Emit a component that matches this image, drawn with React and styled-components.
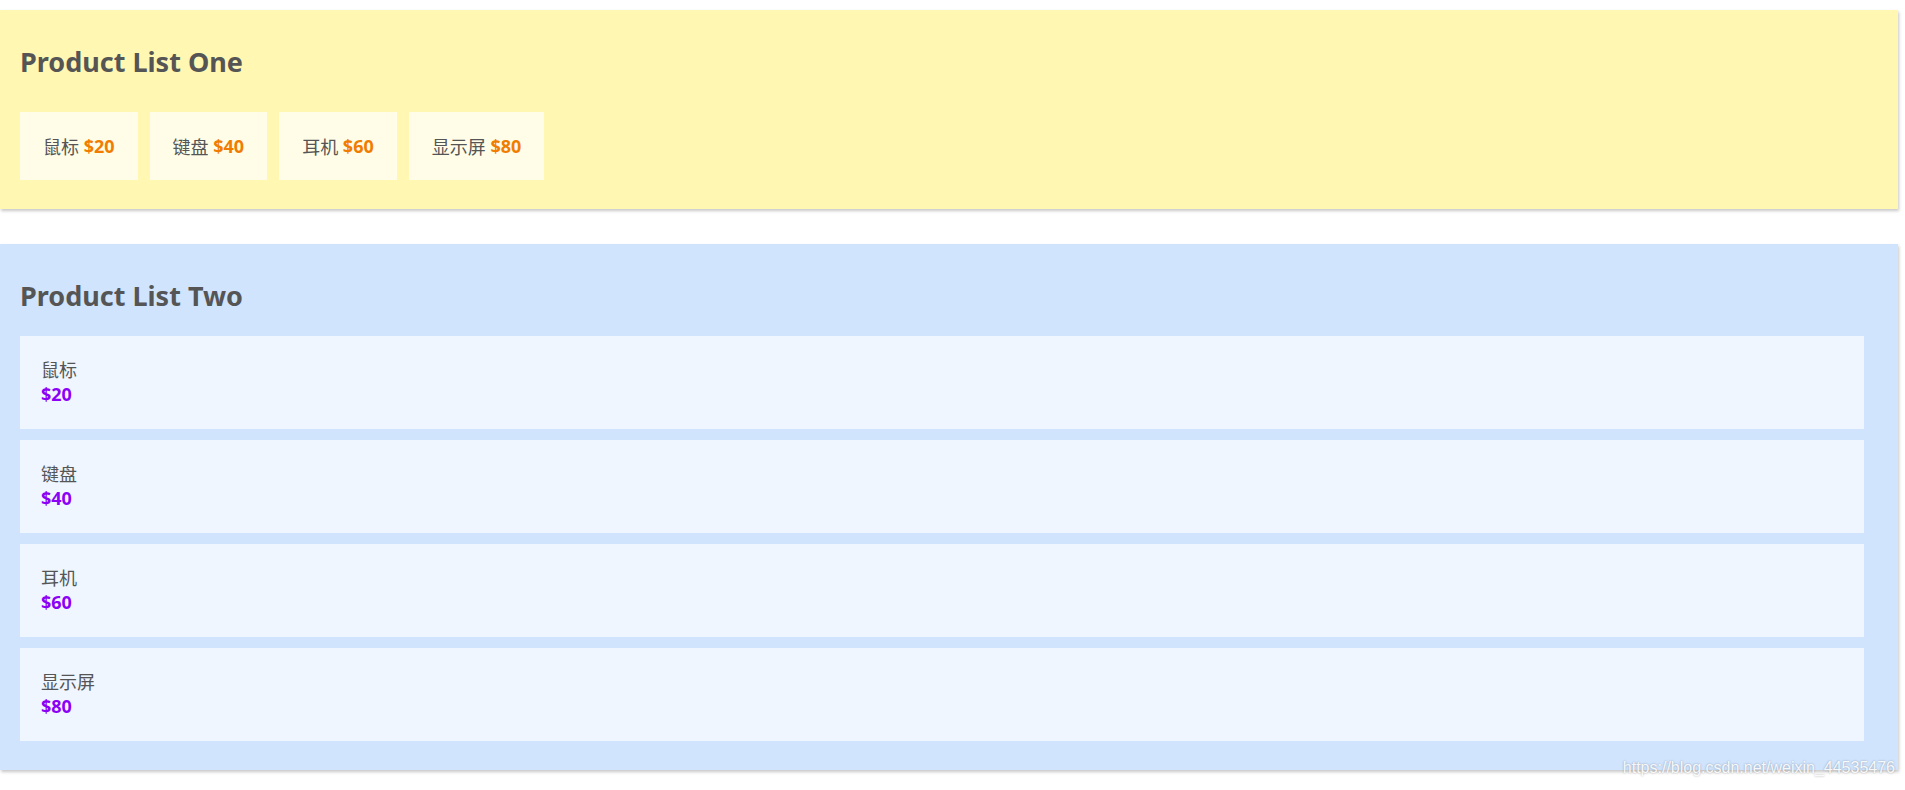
import React from 'react'
import styled, { createGlobalStyle } from 'styled-components';

const GlobalStyle = createGlobalStyle`
  body {
    margin: 0;
    background: #fff;
    font-family: "Noto Sans", "Noto Sans CJK SC", sans-serif;
    color: #555;
  }
`;

const Page = styled.div`
  position: relative;
  padding: 10px 7px 19px 0;
  display: flex;
  flex-direction: column;
  gap: 35px;
`;

const Panel = styled.section`
  background: ${({ bg }) => bg};
  box-shadow: 1px 2px 3px rgba(0, 0, 0, 0.22);
  padding: 32px 34px 29px 20px;
`;

const Title = styled.h2`
  margin: 0;
  font-size: 27px;
  line-height: 40px;
  font-weight: 700;
  color: #555;
`;

const Row = styled.div`
  display: flex;
  gap: 12px;
  margin-top: 30px;
`;

const Card = styled.div`
  background: #fffde8;
  height: 68px;
  padding: 0 23px;
  display: flex;
  align-items: center;
  white-space: pre;
  font-size: 18px;
  color: #555;
`;

const Price = styled.span`
  font-weight: 700;
  color: ${({ tone }) => tone};
`;

const Stack = styled.div`
  display: flex;
  flex-direction: column;
  gap: 11px;
  margin-top: 20px;
`;

const Item = styled.div`
  background: #eff6ff;
  padding: 22px 21px 23px;
  font-size: 18px;
  line-height: 24px;
  display: flex;
  flex-direction: column;
`;

const Watermark = styled.div`
  position: absolute;
  right: 10px;
  bottom: 12px;
  font-family: "Liberation Sans", Arial, sans-serif;
  font-size: 16px;
  color: rgba(255, 255, 255, 0.92);
  text-shadow: 0 0 2px rgba(0, 0, 0, 0.35);
`;

const products = [
  { name: '鼠标', price: 20 },
  { name: '键盘', price: 40 },
  { name: '耳机', price: 60 },
  { name: '显示屏', price: 80 },
];

function App() {
  return (
    <>
      <GlobalStyle />
      <Page>
        <Panel bg="#fff7b2">
          <Title>Product List One</Title>
          <Row>
            {products.map((p) => (
              <Card key={p.name}>
                {p.name + ' '}<Price tone="#f07c00">${p.price}</Price>
              </Card>
            ))}
          </Row>
        </Panel>
        <Panel bg="#d0e4fe">
          <Title>Product List Two</Title>
          <Stack>
            {products.map((p) => (
              <Item key={p.name}>
                <span>{p.name}</span>
                <Price tone="#8c00f5">${p.price}</Price>
              </Item>
            ))}
          </Stack>
        </Panel>
        <Watermark>https://blog.csdn.net/weixin_44535476</Watermark>
      </Page>
    </>
  )
}

export default App
